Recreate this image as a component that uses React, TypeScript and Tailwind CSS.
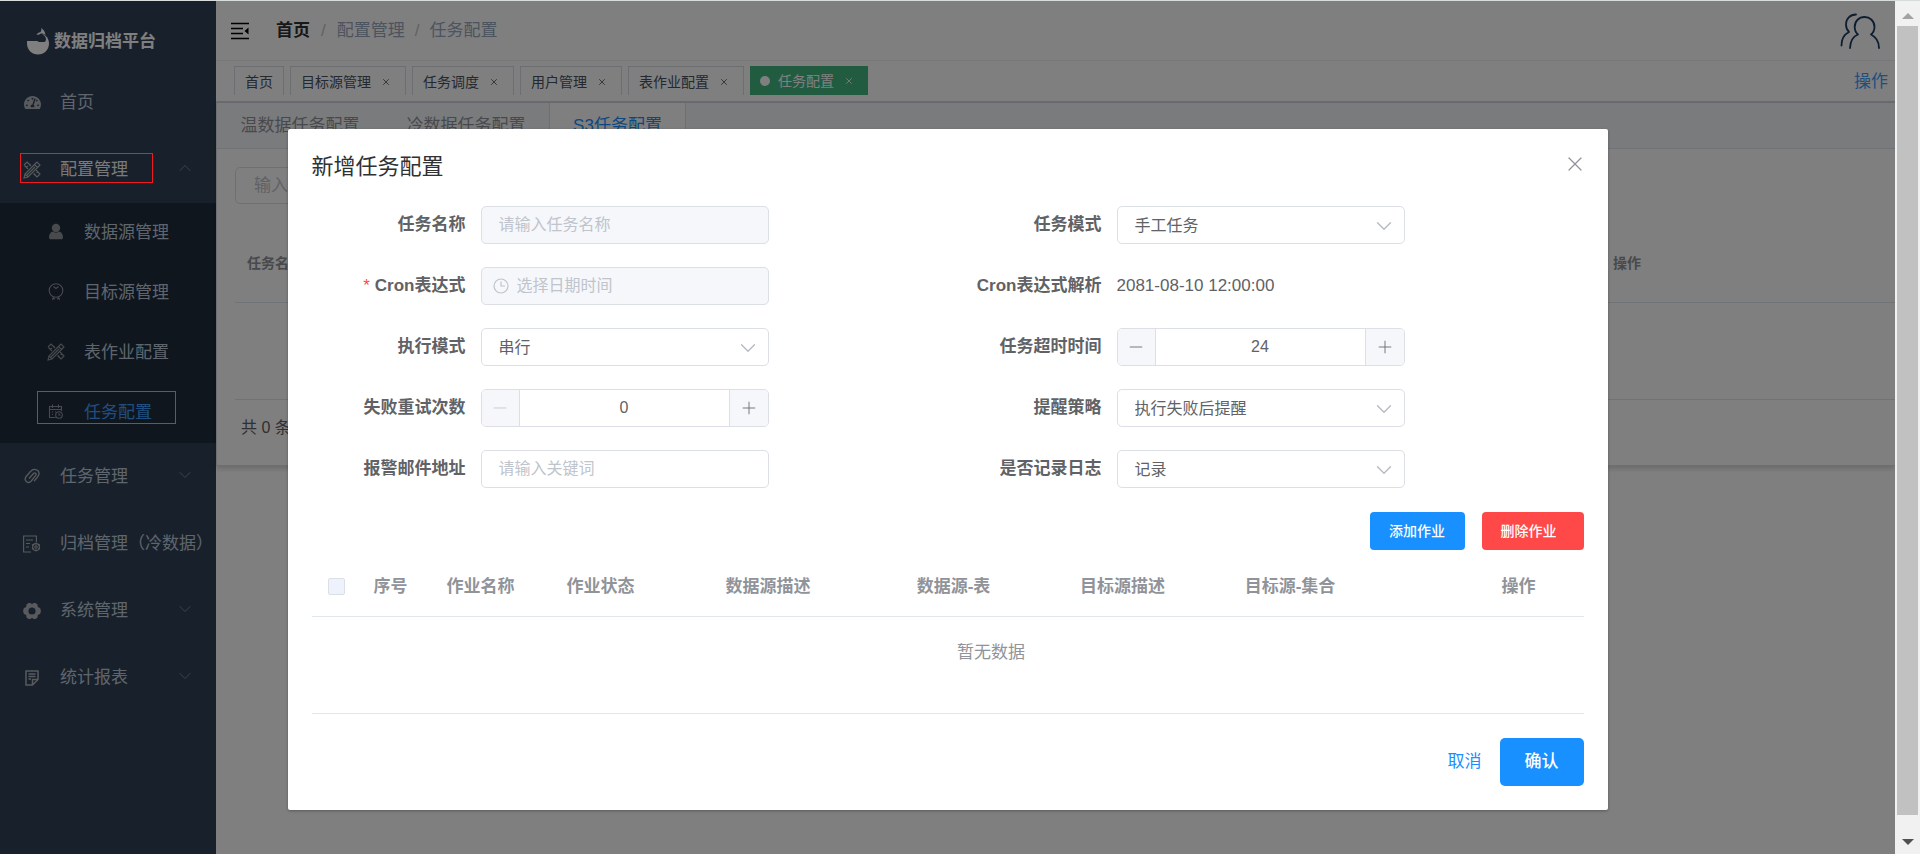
import { ReactNode, useState } from 'react';
import { ChevronDown, ChevronUp, Minus, Plus, X } from 'lucide-react';
import { FaTachometerAlt } from 'react-icons/fa';

const tags = ['首页', '目标源管理', '任务调度', '用户管理', '表作业配置', '任务配置'];

/* icons */
function Logo() {
  return (
    <svg width="22" height="27" viewBox="0 0 22 27" fill="currentColor" aria-hidden="true">
      <path d="M0 13h10.500c.8 1.200 2 1.200 3.500 1h3.500c1.700-.6 2-3.500.6-5.500-.8-1-1.800-1.800-3.100-2.200 4.300.5 7 4.700 7 9.200C22 22 17 26.500 11 26.500S0 22 0 15.500z" />
      <path d="M14.300 0c2.500 1.800 3.900 4 4.200 7-1.500-1.200-3-1.700-4.700-1.500-1.500 1.300-3 1.500-4.300 1 .9-1.200 2-1.900 3.700-2.200 1.100-1 1.400-2.500 1.100-4.300z" />
    </svg>
  );
}

function Tools() {
  return (
    <svg width="18" height="18" viewBox="0 0 18 18" fill="none" stroke="currentColor" strokeWidth="1.100" aria-hidden="true">
      <path d="M1 4 4 1l4 4M10.500 12.500 14 16l3-3-4-4M1 4l4 4M3.500 6.500 5 5M6 4 7.200 2.800M11 14l1.300-1.300M13.500 11.500l1.300-1.300" />
      <path d="M12.500 2.500 14 1l3 3-1.500 1.500L5 16l-4 1 1-4zM11.500 3.500l3 3M4 14l8-8M2 13l3 3" />
    </svg>
  );
}

function Person() {
  return (
    <svg width="18" height="18" viewBox="0 0 18 18" fill="currentColor" aria-hidden="true">
      <circle cx="9" cy="5" r="4.200" />
      <path d="M5.500 8.500c2 1.500 5 1.500 7 0 2.500 1.300 3.500 3.300 3.500 5.500 0 1.700-.6 2.300-1.800 2.300H3.800C2.600 16.300 2 15.700 2 14c0-2.200 1-4.200 3.500-5.500z" />
    </svg>
  );
}

function Medal() {
  return (
    <svg width="18" height="18" viewBox="0 0 18 18" fill="none" stroke="currentColor" strokeWidth="1.100" aria-hidden="true">
      <circle cx="9" cy="7.500" r="6.800" />
      <path d="M6.500 3.500 9 5.500l2.500-2M6.500 14l-1 3M11.500 14l1 3M6 15l2 1M12 15l-2 1" />
    </svg>
  );
}

function CalendarClock() {
  return (
    <svg width="18" height="18" viewBox="0 0 18 18" fill="none" stroke="currentColor" strokeWidth="1.100" aria-hidden="true">
      <path d="M8.500 14.500h-6v-11h12V8M2.500 6.500h12M5.500 1.500V5M11.500 1.500V5M5 9h1M5 11.500h1M8 9h1" />
      <circle cx="12" cy="12" r="3.300" />
      <path d="M12 10.300V12h1.500" />
    </svg>
  );
}

function Clip() {
  return (
    <svg width="18" height="18" viewBox="0 0 18 18" fill="none" stroke="currentColor" strokeWidth="1.300" aria-hidden="true">
      <path d="M6 10.500 10.500 5.500c1.500-1.500 3.500.3 2.200 1.900L8.300 13c-2.800 3.200-8 .2-5.300-4.300l4.700-5.400c3-3.700 9.800-1.300 8.100 3.500-.5 1.700-3 4.400-4.800 6.400" />
    </svg>
  );
}

function Archive() {
  return (
    <svg width="18" height="18" viewBox="0 0 18 18" fill="none" stroke="currentColor" strokeWidth="1.100" aria-hidden="true">
      <path d="M8 17H.6V1h12.800v6M3 5h7M3 8.500h4M3 12h3" />
      <path d="M13 7.500v2M9 9.500l1.500 1M17 9.500l-1.500 1M9 14l1.500-1M17 14l-1.500-1M13 14.500v2" />
      <circle cx="13" cy="12" r="3.400" />
      <circle cx="13" cy="12" r="1.200" />
    </svg>
  );
}

function Gear() {
  return (
    <svg width="18" height="18" viewBox="0 0 18 18" fill="currentColor" fillRule="evenodd" aria-hidden="true">
      <path d="M5.500 1h2L9 2.200 10.500 1h2l2 1.500.3 2.500 2.200 1 .8 2v2l-.8 2-2.200 1-.3 2.500-2 1.500h-2L9 15.800 7.500 17h-2l-2-1.500-.3-2.500L1 12l-.8-2V8L1 6l2.200-1 .3-2.500zM9 5.400a3.600 3.600 0 1 0 0 7.200 3.600 3.600 0 0 0 0-7.200z" />
    </svg>
  );
}

function Report() {
  return (
    <svg width="18" height="18" viewBox="0 0 18 18" fill="none" stroke="currentColor" strokeWidth="1.500" aria-hidden="true">
      <path d="M9.500 16H3V2h12v8.500zM9.500 16v-5.500H15M5.500 5h7M5.500 7.500h7M5.500 10H8" />
    </svg>
  );
}

function Fold() {
  return (
    <svg width="20" height="18" viewBox="0 0 20 18" fill="none" stroke="currentColor" strokeWidth="1.600" aria-hidden="true">
      <path d="M1 1.500h18M1 6.500h12M1 11.500h12M1 16.500h18" />
      <path d="M18.500 5.500v7L14.500 9z" fill="currentColor" stroke="none" />
    </svg>
  );
}

function Users() {
  return (
    <svg width="42" height="38" viewBox="0 0 42 38" fill="none" stroke="currentColor" strokeWidth="1.800" strokeLinecap="round" strokeLinejoin="round" aria-hidden="true">
      <path d="M11 36c.3-6.500 3-11.500 8-13.500-2.300-2-3.300-4.500-3.300-7.500 0-6 4.300-10 9.800-10s10 4 10 10c0 3-1 5.500-3.500 7.500 5 2.500 8 7 8 13.500" />
      <path d="M17 2.500C11 2.500 7 7 7 12.500c0 3 1 5.500 3 7.500-5 2.500-7.500 7-7.500 13.500" />
    </svg>
  );
}

type MenuProps = { icon: ReactNode; label: string; arrow?: 'up' | 'down'; active?: boolean };

function MenuItem({ icon, label, arrow, active }: MenuProps) {
  const Arrow = arrow === 'up' ? ChevronUp : ChevronDown;
  return (
    <a
      href="#"
      className={`relative flex h-[67px] items-center pl-[23px] text-[17px] whitespace-nowrap ${active ? 'text-[#f4f4f5]' : 'text-[#bfcbd9]'}`}
    >
      {active && <span className="absolute top-[17px] left-5 z-20 h-[30px] w-[133px] border border-[#f01a22]" />}
      <span className="mr-[19px] flex w-[18px] justify-center text-[#b0b4ba]">{icon}</span>
      {label}
      {arrow && <Arrow size={20} strokeWidth={1} className="absolute top-[22px] right-[21px] text-[#909399]" />}
    </a>
  );
}

function SubItem({ icon, label, active }: MenuProps) {
  return (
    <a
      href="#"
      className={`relative flex h-[60px] items-center pl-[47px] text-[17px] ${active ? 'text-[#409eff]' : 'text-[#bfcbd9]'}`}
    >
      {active && <span className="absolute top-2 left-[37px] z-20 h-[33px] w-[139px] border border-[#e0242a]" />}
      <span className="mr-[19px] pb-[2px] text-[#90949a]">{icon}</span>
      {label}
    </a>
  );
}

function Sidebar() {
  return (
    <nav className="w-[216px] shrink-0 bg-[#304156]">
      <div className="flex h-[68px] items-center gap-[5px] pt-[13px] pl-[27px] text-[17px] font-bold text-white">
        <Logo />
        数据归档平台
      </div>
      <MenuItem icon={<FaTachometerAlt size={17} />} label="首页" />
      <MenuItem icon={<Tools />} label="配置管理" arrow="up" active />
      <div className="bg-[#1f2d3d]">
        <SubItem icon={<Person />} label="数据源管理" />
        <SubItem icon={<Medal />} label="目标源管理" />
        <SubItem icon={<Tools />} label="表作业配置" />
        <SubItem icon={<CalendarClock />} label="任务配置" active />
      </div>
      <MenuItem icon={<Clip />} label="任务管理" arrow="down" />
      <MenuItem icon={<Archive />} label="归档管理（冷数据）" />
      <MenuItem icon={<Gear />} label="系统管理" arrow="down" />
      <MenuItem icon={<Report />} label="统计报表" arrow="down" />
    </nav>
  );
}

function Page() {
  return (
    <main className="min-w-0 flex-1 bg-white">
      {/* header */}
      <header className="flex h-[60px] items-center justify-between border-b border-[#eef0f4] pr-[14px] pl-[14px]">
        <div className="flex items-center text-[17px]">
          <button type="button" aria-label="收起菜单" className="mr-[26px] text-black">
            <Fold />
          </button>
          <a href="#" className="font-bold text-[#303133]">
            首页
          </a>
          <span className="mx-[11px] text-[#c0c4cc]">/</span>
          <span className="text-[#97a8be]">配置管理</span>
          <span className="mx-[10px] text-[#c0c4cc]">/</span>
          <span className="text-[#97a8be]">任务配置</span>
        </div>
        <span className="text-[#1a3c60]">
          <Users />
        </span>
      </header>

      {/* opened pages */}
      <div className="flex h-[42px] items-start justify-between border-b-2 border-[#d8dce5] pt-[5px] pr-[7px] pl-[18px]">
        <div className="flex gap-[6px] text-sm">
          {tags.map((tag, i) => {
            const active = i === tags.length - 1;
            return (
              <div
                key={tag}
                className={`flex h-[29px] items-center px-[10px] pt-px ${active ? 'bg-[#42b983] text-white' : 'border border-b-0 border-[#d8dce5] text-[#495060]'}`}
              >
                {active && <span className="mr-2 size-[10px] rounded-full bg-white" />}
                <a href="#">{tag}</a>
                {i > 0 && (
                  <button type="button" aria-label={`关闭${tag}`} className="flex w-6 justify-center pl-[6px]">
                    <X size={10} strokeWidth={2} />
                  </button>
                )}
              </div>
            );
          })}
        </div>
        <a href="#" className="text-[17px] leading-8 text-[#409eff]">
          操作
        </a>
      </div>

      {/* card */}
      <section className="border-b border-l border-[#dcdfe6] shadow-[0_2px_6px_rgba(0,0,0,0.2)]">
        <div className="flex h-[46px] border-b border-[#dfe4ed] bg-[#f5f7fa] text-[17px] text-[#909399]">
          <button type="button" className="w-[166px]">
            温数据任务配置
          </button>
          <button type="button" className="w-[166px]">
            冷数据任务配置
          </button>
          <button type="button" className="w-[137px] border-x border-[#dcdfe6] bg-white text-[#1890ff]">
            S3任务配置
          </button>
        </div>
        <div className="pt-[18px] pl-[18px]">
          <input
            aria-label="任务名称"
            placeholder="输入任务名称"
            className="h-[37px] w-[240px] rounded-[5px] border border-[#dcdfe6] px-[18px] text-[17px] placeholder:text-[#c0c4cc]"
          />
          <table className="mt-5 w-full table-fixed text-left text-sm text-[#909399]">
            <thead>
              <tr className="h-[78px] border-b border-[#dfe6ec]">
                <th className="w-[1366px] pl-3">任务名称</th>
                <th className="pl-3">操作</th>
              </tr>
            </thead>
            <tbody>
              <tr className="h-[97px] border-b border-[#dfe6ec]">
                <td colSpan={2} />
              </tr>
            </tbody>
          </table>
          <div className="h-[65px] pt-4 pl-[6px] text-base text-[#606266]">共 0 条</div>
        </div>
      </section>
    </main>
  );
}

/* form parts */
const field = 'h-[38px] w-full rounded-[5px] border border-[#dcdfe6] text-base text-[#606266] placeholder:text-[#c0c4cc]';

function Row({ id, label, required, children }: { id: string; label: string; required?: boolean; children: ReactNode }) {
  return (
    <div className="flex items-center text-[17px] text-[#606266]">
      <label htmlFor={id} className="w-[169px] shrink-0 pr-[15px] text-right font-bold whitespace-nowrap">
        {required && <span className="mr-[5px] font-normal text-[#ff4949]">*</span>}
        {label}
      </label>
      <div className="relative h-[38px] w-[288px]">{children}</div>
    </div>
  );
}

function Select({ id, options }: { id: string; options: string[] }) {
  return (
    <>
      <select id={id} className={`${field} appearance-none bg-white px-[17px] pt-px`}>
        {options.map((o) => (
          <option key={o}>{o}</option>
        ))}
      </select>
      <ChevronDown size={26} strokeWidth={1.2} className="pointer-events-none absolute top-[7px] right-2 text-[#b4b8c0]" />
    </>
  );
}

function Counter({ id, initial }: { id: string; initial: number }) {
  const [value, setValue] = useState(initial);
  return (
    <div className="flex h-full overflow-hidden rounded-[5px] border border-[#dcdfe6]">
      <button
        type="button"
        aria-label="减少"
        disabled={value === 0}
        onClick={() => setValue(value - 1)}
        className="flex w-[38px] items-center justify-center border-r border-[#dcdfe6] bg-[#f5f7fa] text-[#606266] disabled:text-[#c0c4cc]"
      >
        <Minus size={20} strokeWidth={1} />
      </button>
      <input
        id={id}
        inputMode="numeric"
        value={value}
        onChange={(e) => setValue(Number(e.target.value) || 0)}
        className="min-w-0 flex-1 text-center text-base"
      />
      <button
        type="button"
        aria-label="增加"
        onClick={() => setValue(value + 1)}
        className="flex w-[39px] items-center justify-center border-l border-[#dcdfe6] bg-[#f5f7fa]"
      >
        <Plus size={20} strokeWidth={1} />
      </button>
    </div>
  );
}

function TaskDialog() {
  return (
    <div
      role="dialog"
      aria-label="新增任务配置"
      className="mx-auto mt-32 w-[70%] max-w-[1320px] rounded-[2px] bg-white px-6 pb-6 shadow-[0_1px_3px_rgba(0,0,0,0.3)]"
    >
      <div className="flex items-start justify-between pt-[23px]">
        <h2 className="text-[22px] leading-[30px] text-[#303133]">新增任务配置</h2>
        <button type="button" aria-label="关闭" className="-mr-[3px] text-[#909399]">
          <X size={24} strokeWidth={1.2} />
        </button>
      </div>

      <form className="mt-6 grid grid-cols-2 gap-y-[23px]">
        <Row id="name" label="任务名称">
          <input id="name" disabled placeholder="请输入任务名称" className={`${field} bg-[#f5f7fa] px-[17px]`} />
        </Row>
        <Row id="mode" label="任务模式">
          <Select id="mode" options={['手工任务']} />
        </Row>
        <Row id="cron" label="Cron表达式" required>
          <input id="cron" disabled placeholder="选择日期时间" className={`${field} bg-[#f5f7fa] pl-[35px]`} />
          <svg width="16" height="16" viewBox="0 0 16 16" fill="none" stroke="#c0c4cc" strokeWidth="1.200" className="absolute top-[11px] left-3">
            <circle cx="8" cy="8" r="7" />
            <path d="M8 3.500V8h4" />
          </svg>
        </Row>
        <Row id="parsed" label="Cron表达式解析">
          <output id="parsed" className="leading-[38px]">
            2081-08-10 12:00:00
          </output>
        </Row>
        <Row id="exec" label="执行模式">
          <Select id="exec" options={['串行']} />
        </Row>
        <Row id="timeout" label="任务超时时间">
          <Counter id="timeout" initial={24} />
        </Row>
        <Row id="retry" label="失败重试次数">
          <Counter id="retry" initial={0} />
        </Row>
        <Row id="notify" label="提醒策略">
          <Select id="notify" options={['执行失败后提醒']} />
        </Row>
        <Row id="mail" label="报警邮件地址">
          <input id="mail" placeholder="请输入关键词" className={`${field} px-[17px]`} />
        </Row>
        <Row id="log" label="是否记录日志">
          <Select id="log" options={['记录']} />
        </Row>
      </form>

      <div className="mt-6 flex justify-end gap-[17px] text-sm font-medium text-white">
        <button type="button" className="h-[38px] w-[95px] rounded-[4px] bg-[#1890ff]">
          添加作业
        </button>
        <button type="button" className="h-[38px] w-[102px] rounded-[4px] bg-[#ff4949] pr-2">
          删除作业
        </button>
      </div>

      {/* the job table is wider than the dialog */}
      <div className="mt-2 overflow-hidden border-b border-[#dfe6ec]">
        <table className="w-[1359px] table-fixed text-[17px] text-[#909399]">
          <thead>
            <tr className="h-[58px] border-b border-[#dfe6ec]">
              <th className="w-[49px]">
                <input
                  type="checkbox"
                  disabled
                  aria-label="全选"
                  className="ml-4 block size-[17px] appearance-none rounded-[2px] border border-[#dcdfe6] bg-[#edf2fc]"
                />
              </th>
              <th className="w-[60px]">序号</th>
              <th className="w-[120px]">作业名称</th>
              <th className="w-[120px]">作业状态</th>
              <th className="w-[215px]">数据源描述</th>
              <th className="w-[156px]">数据源-表</th>
              <th className="w-[182px]">目标源描述</th>
              <th className="w-[153px]">目标源-集合</th>
              <th>操作</th>
            </tr>
          </thead>
          <tbody>
            <tr className="h-[97px]">
              <td colSpan={9} className="pb-6 text-center">
                暂无数据
              </td>
            </tr>
          </tbody>
        </table>
      </div>

      <div className="mt-6 flex justify-end gap-[18px] text-[17px]">
        <button type="button" className="text-[#1890ff]">
          取消
        </button>
        <button type="button" className="h-12 w-[84px] rounded-[5px] bg-[#1890ff] font-medium text-white">
          确认
        </button>
      </div>
    </div>
  );
}

function Scrollbar() {
  return (
    <div aria-hidden="true" className="flex w-[25px] shrink-0 flex-col items-center bg-[#f1f1f1]">
      <div className="flex h-[25px] items-center pt-1">
        <svg width="12" height="6" viewBox="0 0 12 6" fill="#a3a3a3">
          <path d="M6 0l6 6H0z" />
        </svg>
      </div>
      <div className="w-[21px] flex-1 bg-[#c1c1c1]" />
      <div className="flex h-[39px] items-end pb-[9px]">
        <svg width="12" height="6" viewBox="0 0 12 6" fill="#505050">
          <path d="M6 6 0 0h12z" />
        </svg>
      </div>
    </div>
  );
}

export default function App() {
  return (
    <div className="flex h-screen overflow-hidden border-t border-[#d9dcdc] font-['Liberation_Sans','Noto_Sans_CJK_SC',sans-serif]">
      <div className="relative flex min-w-0 flex-1 overflow-hidden">
        <Sidebar />
        <Page />
        <div className="absolute inset-0 z-10 overflow-hidden bg-black/50">
          <TaskDialog />
        </div>
      </div>
      <Scrollbar />
    </div>
  );
}
